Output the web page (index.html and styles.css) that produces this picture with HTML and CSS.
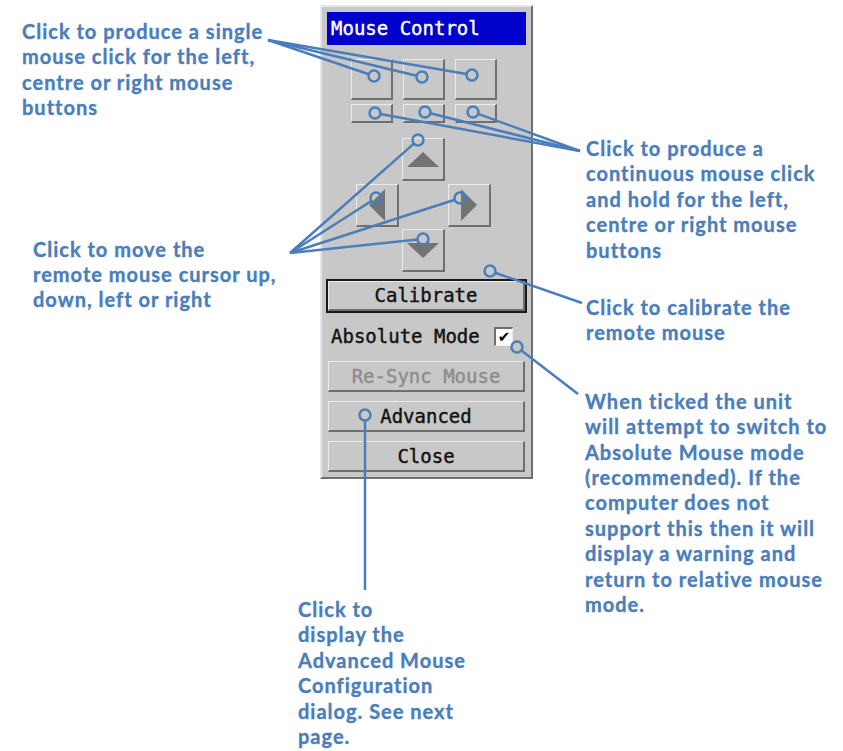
FILE: index.html
```html
<!DOCTYPE html>
<html>
<head>
<meta http-equiv="Content-Type" content="text/html; charset=utf-8"/>
<title>Mouse Control</title>
<link rel="stylesheet" href="styles.css">
</head>
<body>
<div class="sheet">

  <div class="col-left">
    <p class="note note-single">Click to produce a single<br>mouse click for the left,<br>centre or right mouse<br>buttons</p>
    <p class="note note-move">Click to move the<br>remote mouse cursor up,<br>down, left or right</p>
  </div>

  <div class="panel">
    <div class="title">Mouse Control</div>

    <div class="clicks">
      <div class="btn big"></div>
      <div class="btn big"></div>
      <div class="btn big"></div>
    </div>
    <div class="clicks holds">
      <div class="btn small"></div>
      <div class="btn small"></div>
      <div class="btn small"></div>
    </div>

    <div class="pad">
      <div class="btn arrow up"><span class="tri tri-up"></span></div>
      <div class="btn arrow left"><span class="tri tri-left"></span></div>
      <div class="btn arrow right"><span class="tri tri-right"></span></div>
      <div class="btn arrow down"><span class="tri tri-down"></span></div>
    </div>

    <div class="default"><div class="btn wide">Calibrate</div></div>

    <div class="check-row">
      <span>Absolute Mode</span>
      <span class="check">&#10004;</span>
    </div>

    <div class="btn wide disabled">Re-Sync Mouse</div>
    <div class="btn wide">Advanced</div>
    <div class="btn wide">Close</div>
  </div>

  <div class="col-right">
    <p class="note note-hold">Click to produce a<br>continuous mouse click<br>and hold for the left,<br>centre or right mouse<br>buttons</p>
    <p class="note note-calibrate">Click to calibrate the<br>remote mouse</p>
    <p class="note note-absolute">When ticked the unit<br>will attempt to switch to<br>Absolute Mouse mode<br>(recommended). If the<br>computer does not<br>support this then it will<br>display a warning and<br>return to relative mouse<br>mode.</p>
  </div>

  <p class="note note-advanced">Click to<br>display the<br>Advanced Mouse<br>Configuration<br>dialog. See next<br>page.</p>

  <!-- leader lines from each note to the control it describes -->
  <svg class="leaders" width="843" height="751" viewBox="0 0 843 751">
    <g class="lines">
      <line x1="268" y1="40" x2="368.8" y2="74.2"/>
      <line x1="268" y1="40" x2="416.7" y2="75.7"/>
      <line x1="268" y1="40" x2="466.6" y2="74.1"/>

      <line x1="580" y1="151" x2="380.4" y2="114"/>
      <line x1="580" y1="151" x2="430.3" y2="113.3"/>
      <line x1="580" y1="151" x2="478.2" y2="113.9"/>

      <line x1="290" y1="253" x2="413.9" y2="143.6"/>
      <line x1="290" y1="253" x2="371.4" y2="201"/>
      <line x1="290" y1="253" x2="454.8" y2="199.7"/>
      <line x1="290" y1="253" x2="417.5" y2="239.6"/>

      <line x1="582" y1="303" x2="495.2" y2="272.8"/>
      <line x1="578" y1="394" x2="521.4" y2="350.4"/>
      <line x1="365" y1="590" x2="365" y2="420.5"/>
    </g>
    <g class="dots">
      <circle cx="374" cy="76" r="5.5"/>
      <circle cx="422" cy="77" r="5.5"/>
      <circle cx="472" cy="75" r="5.5"/>
      <circle cx="375" cy="113" r="5.5"/>
      <circle cx="425" cy="112" r="5.5"/>
      <circle cx="473" cy="112" r="5.5"/>
      <circle cx="418" cy="140" r="5.5"/>
      <circle cx="376" cy="198" r="5.5"/>
      <circle cx="460" cy="198" r="5.5"/>
      <circle cx="423" cy="239" r="5.5"/>
      <circle cx="490" cy="271" r="5.5"/>
      <circle cx="517" cy="347" r="5.5"/>
      <circle cx="365" cy="415" r="5.5"/>
    </g>
  </svg>

</div>
</body>
</html>
```

FILE: styles.css
```css
body {
  margin: 0;
  background-color: white;
}

.sheet {
  position: relative;
  width: 843px;
  height: 751px;
  overflow: hidden;
  display: grid;
  grid-template-columns: 320px 213px 310px;
  grid-template-rows: 479px auto;
  align-items: start;
}

/* callout text */
.note {
  margin: 0;
  font-family: Lato, "Open Sans", sans-serif;
  font-weight: 700;
  font-size: 20px;
  letter-spacing: 1px;
  line-height: 25.4px;
  color: #4a7ebb;
  -webkit-text-stroke: 0.35px #4a7ebb;
  white-space: nowrap;
}

.col-left {
  grid-column: 1;
  grid-row: 1;
  padding-left: 22px;
}
.note-single {
  margin-top: 19px;
}
.note-move {
  margin-top: 116px;
  margin-left: 11px;
}

.col-right {
  grid-column: 3;
  grid-row: 1 / span 2;
  padding-left: 53px;
}
.note-hold {
  margin-top: 136px;
}
.note-calibrate {
  margin-top: 32px;
}
.note-absolute {
  margin-top: 43px;
  margin-left: -1px;
}

.note-advanced {
  grid-column: 1 / span 2;
  grid-row: 2;
  margin-top: 118px;
  padding-left: 298px;
}

.leaders {
  position: absolute;
  left: 0;
  top: 0;
  pointer-events: none;
}
.leaders line {
  stroke: #4a7ebb;
  stroke-width: 2.5;
}
.leaders circle {
  fill: none;
  stroke: #4a7ebb;
  stroke-width: 2.5;
}

/* the mouse control window */
.panel {
  grid-column: 2;
  grid-row: 1;
  box-sizing: border-box;
  width: 213px;
  height: 474px;
  margin-top: 5px;
  padding: 5px;
  background: #c8c8c8;
  border: 2px solid;
  border-color: #e6e6e6 #6f6f6f #6f6f6f #e6e6e6;
  display: flex;
  flex-direction: column;
  font-family: "DejaVu Sans Mono", "Liberation Mono", monospace;
  font-size: 19px;
  color: #111;
  -webkit-text-stroke: 0.4px currentColor;
}

.title {
  height: 33px;
  line-height: 33px;
  padding-left: 4px;
  background: #0000cc;
  color: white;
}

.btn {
  box-sizing: border-box;
  background: #c8c8c8;
  border-style: solid;
  border-width: 1px 2px 2px 1px;
  border-color: #ececec #6f6f6f #6f6f6f #ececec;
}

.clicks {
  display: flex;
  gap: 10px;
  padding-left: 24px;
  margin-top: 14px;
}
.clicks.holds {
  margin-top: 4px;
}
.big {
  width: 42px;
  height: 41px;
}
.small {
  width: 42px;
  height: 19px;
}

.pad {
  display: grid;
  grid-template-columns: repeat(3, 43px);
  grid-template-rows: repeat(3, 43px);
  gap: 2.5px 3px;
  margin-top: 15px;
  margin-left: 29px;
}
.arrow {
  display: flex;
  align-items: center;
  justify-content: center;
}
.up { grid-column: 2; grid-row: 1; }
.left { grid-column: 1; grid-row: 2; }
.right { grid-column: 3; grid-row: 2; }
.down { grid-column: 2; grid-row: 3; }

.tri {
  width: 0;
  height: 0;
  border-style: solid;
  border-color: transparent;
}
.tri-up {
  border-width: 0 16px 15px 16px;
  border-bottom-color: #737373;
}
.tri-down {
  border-width: 15px 16px 0 16px;
  border-top-color: #737373;
}
.tri-left {
  border-width: 16px 16px 16px 0;
  border-right-color: #737373;
}
.tri-right {
  border-width: 16px 0 16px 16px;
  border-left-color: #737373;
}

.wide {
  height: 31px;
  line-height: 28px;
  text-align: center;
  margin: 9px 1px 0 1px;
}
.default {
  margin: 7px -1px 0 -1px;
  border: 2px solid #1a1a1a;
}
.default .wide {
  margin: 0;
  height: 30px;
  line-height: 27px;
}
.disabled {
  color: #8c8c8c;
  margin-top: 15px;
}

.check-row {
  display: flex;
  align-items: center;
  justify-content: space-between;
  margin-top: 13px;
  padding: 0 13px 0 4px;
  height: 20px;
}
.check {
  box-sizing: border-box;
  width: 19px;
  height: 19px;
  background: white;
  border-style: solid;
  border-width: 2px 1px 1px 2px;
  border-color: #6f6f6f #ececec #ececec #6f6f6f;
  font-family: "DejaVu Sans", sans-serif;
  font-size: 15px;
  font-weight: 700;
  line-height: 16px;
  text-align: center;
  color: #000;
  -webkit-text-stroke: 0;
}
```
